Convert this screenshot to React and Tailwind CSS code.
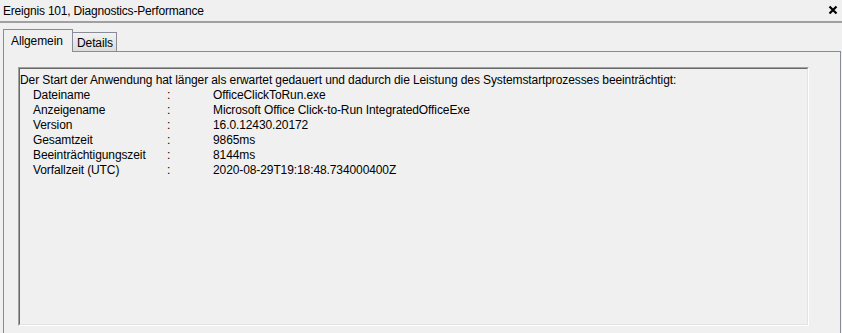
import React from "react";

const rows = [
  ["Dateiname", "OfficeClickToRun.exe"],
  ["Anzeigename", "Microsoft Office Click-to-Run IntegratedOfficeExe"],
  ["Version", "16.0.12430.20172"],
  ["Gesamtzeit", "9865ms"],
  ["Beeinträchtigungszeit", "8144ms"],
  ["Vorfallzeit (UTC)", "2020-08-29T19:18:48.734000400Z"],
];

const App = () => {
  return (
    <div className="w-[842px] h-[333px] overflow-hidden bg-[#f0f0f0] text-[12px] tracking-[-0.1px] text-black font-['Liberation_Sans',sans-serif]">
      {/* title bar */}
      <div className="h-[23px] flex items-start justify-between pl-[3px] pr-[3px] pt-[4px] border-b-2 border-[#a0a0a0]">
        <span className="leading-[15px] tracking-[-0.2px]">Ereignis 101, Diagnostics-Performance</span>
        <svg width="10" height="10" viewBox="0 0 10 10" className="mt-[1px] mr-[1px]">
          <path d="M1.5 1.5 L8.5 8.5 M8.5 1.5 L1.5 8.5" stroke="#000" strokeWidth="2.2" />
        </svg>
      </div>

      {/* tabs */}
      <div className="flex items-end pl-[3px] pt-[6px]">
        <div className="relative z-10 -mb-px h-[23px] w-[70px] border border-b-0 border-[#898c95] bg-[#f0f0f0] pl-[7px] pt-[1px] leading-[20px]">
          Allgemein
        </div>
        <div className="h-[19px] w-[44px] border border-l-0 border-b-0 border-[#898c95] bg-gradient-to-b from-[#f2f2f2] to-[#dcdcdc] px-[4px] pt-[1px] leading-[18px]">
          Details
        </div>
      </div>

      {/* tab panel */}
      <div className="ml-[3px] w-[838px] h-[300px] border border-[#898c95] pl-[14px] pt-[15px]">
        <div className="w-[791px] h-[259px] border-t border-l border-r border-b border-t-[#a0a0a0] border-l-[#a0a0a0] border-r-white border-b-white">
          <div className="h-full border-t border-l border-r border-b border-t-[#696969] border-l-[#696969] border-r-[#e3e3e3] border-b-[#e3e3e3] pt-[4px] leading-[15px]">
            <div>
              Der Start der Anwendung hat länger als erwartet gedauert und dadurch die Leistung des Systemstartprozesses beeinträchtigt:
            </div>
            {rows.map(([label, value]) => (
              <div key={label} className="flex pl-[13px]">
                <span className="w-[134px]">{label}</span>
                <span className="w-[46px]">:</span>
                <span>{value}</span>
              </div>
            ))}
          </div>
        </div>
      </div>
    </div>
  );
};

export default App;
